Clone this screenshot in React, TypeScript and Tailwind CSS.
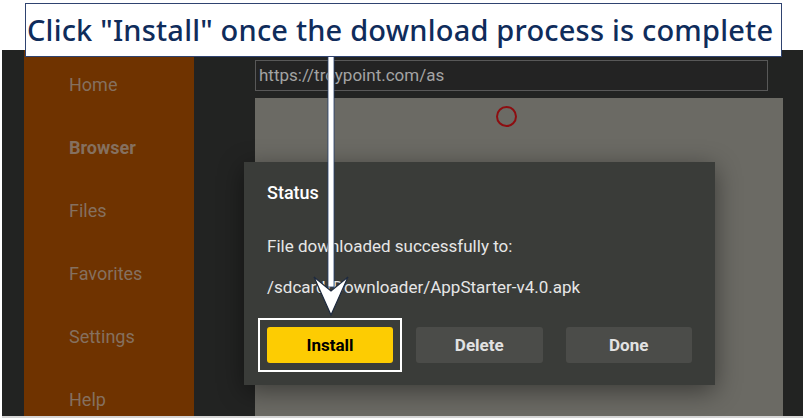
import React from "react";

const menu = [
  { label: "Home", bold: false },
  { label: "Browser", bold: true },
  { label: "Files", bold: false },
  { label: "Favorites", bold: false },
  { label: "Settings", bold: false },
  { label: "Help", bold: false },
];

export default function App() {
  return (
    <div className="relative w-[806px] h-[420px] bg-white overflow-hidden" style={{ fontFamily: "Roboto, 'Liberation Sans', sans-serif" }}>
      <div className="pt-[50px] pl-[2px] w-[803px]">
        <div className="relative flex h-[366px] bg-[#222322] border-b-[2px] border-[#d6d6d6] box-content">
          <div className="w-[22px]" />
          <div className="w-[170px] bg-[#6f3300] flex flex-col pt-[21px] pl-[45px] gap-[36px]">
            {menu.map((m) => (
              <div
                key={m.label}
                className={`h-[27px] leading-[27px] text-[18px] text-[#85705f] ${m.bold ? "font-bold" : "font-normal"}`}
              >
                {m.label}
              </div>
            ))}
          </div>
          <div className="w-[61px]" />
          <div className="w-[528px] flex flex-col pt-[10px]">
            <div className="h-[31px] mr-[15px] border border-[#585858] bg-[#232323] flex items-center px-[3px] text-[17px] text-[#a4a4a4]">
              https://troypoint.com/as
            </div>
            <div className="mt-[7px] flex-1 bg-[#6b6a64] relative">
              <div className="absolute left-[241px] top-[8px] w-[21px] h-[21px] rounded-full border-[2.5px] border-[#8d0d10]" />
            </div>
          </div>
          <div className="w-[20px]" />

          <div className="absolute left-[242px] top-[112px] w-[471px] h-[223px] bg-[#3a3c39] shadow-[0_6px_24px_rgba(0,0,0,0.45)] flex flex-col pl-[23px] pr-[23px] pt-[19px]">
            <div className="h-[24px] leading-[24px] text-[18px] font-medium text-white">Status</div>
            <div className="mt-[29px] h-[24px] leading-[24px] text-[17px] text-[#e6e6e6]">File downloaded successfully to:</div>
            <div className="mt-[17px] h-[24px] leading-[24px] text-[17px] text-[#e6e6e6]">/sdcard/Downloader/AppStarter-v4.0.apk</div>
            <div className="mt-[28px] flex gap-[23px]">
              <div className="-m-[9px] p-[7px] border-2 border-white">
                <div className="w-[126px] h-[36px] rounded-[3px] bg-[#fdcc02] flex items-center justify-center pt-[2px] text-[17px] font-bold text-black">
                  Install
                </div>
              </div>
              <div className="w-[127px] h-[36px] rounded-[3px] bg-[#4b4c49] flex items-center justify-center pt-[2px] text-[17px] font-bold text-[#e2e2e2]">
                Delete
              </div>
              <div className="w-[127px] h-[36px] rounded-[3px] bg-[#4b4c49] flex items-center justify-center pt-[2px] text-[17px] font-bold text-[#e2e2e2]">
                Done
              </div>
            </div>
          </div>
        </div>
      </div>

      <svg className="absolute left-0 top-0" width="806" height="420" viewBox="0 0 806 420">
        <rect x="328" y="55" width="6" height="232" fill="#ffffff" stroke="#27406b" strokeWidth="0.8" />
        <polygon points="314,277 331,291 348,277 331,315" fill="#ffffff" stroke="#1e2a3e" strokeWidth="1.2" strokeLinejoin="miter" />
      </svg>

      <div
        className="absolute left-[25px] top-[3px] w-[757px] h-[54px] bg-white border border-[#2f4370] flex items-center pl-[1px] text-[29px] font-medium text-[#0f2c5b] whitespace-nowrap tracking-[0.2px]"
        style={{ fontFamily: "'Noto Sans', 'Open Sans', sans-serif" }}
      >
        Click "Install" once the download process is complete
      </div>
    </div>
  );
}
